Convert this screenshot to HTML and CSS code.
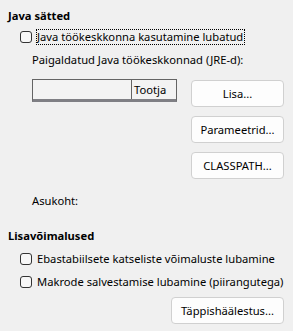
FILE: index.html
```html
<!DOCTYPE html>
<html lang="et">
<head>
    <meta charset="UTF-8">
    <title>Täpsemalt</title>
    <link rel="stylesheet" href="styles.css">
</head>
<body>
    <div class="page">
        <h2 class="group-title">Java sätted</h2>
        <label class="check-row first">
            <span class="check-box"></span>
            <span class="check-label focused">Java töökeskkonna kasutamine lubatud</span>
        </label>
        <div class="sub-label">Paigaldatud Java töökeskkonnad (JRE-d):</div>

        <div class="jre-area">
            <div class="jre-left">
                <div class="jre-table">
                    <div class="jre-cell"></div>
                    <div class="jre-cell head">Tootja</div>
                </div>
                <div class="location">Asukoht:</div>
            </div>
            <div class="jre-buttons">
                <button class="btn">Lisa...</button>
                <button class="btn">Parameetrid...</button>
                <button class="btn">CLASSPATH...</button>
            </div>
        </div>

        <h2 class="group-title second">Lisavõimalused</h2>
        <label class="check-row">
            <span class="check-box"></span>
            <span class="check-label">Ebastabiilsete katseliste võimaluste lubamine</span>
        </label>
        <label class="check-row">
            <span class="check-box"></span>
            <span class="check-label">Makrode salvestamise lubamine (piirangutega)</span>
        </label>
        <div class="bottom-actions">
            <button class="btn wide">Täppishäälestus...</button>
        </div>
    </div>
</body>
</html>
```

FILE: styles.css
```css
body { margin: 0; background: #f0f0f0; color: #000; font-family: 'Noto Sans', sans-serif; font-size: 11.2px; }
.page { padding: 8px 9px 0 8px; white-space: nowrap; }
.group-title { margin: 0; font-size: 11.2px; font-weight: bold; line-height: 16px; }
.group-title.second { margin-top: 19px; }

.check-row { display: flex; align-items: center; gap: 4px; margin-left: 12px; height: 16px; margin-top: 7px; }
.check-row.first { margin-top: 5px; }
.check-box { width: 10px; height: 10px; border: 1px solid #333; border-radius: 3px; background: #f7f7f7; flex: none; }
.check-label { line-height: 14px; padding: 0 1px 0 0; border: 1px solid transparent; }
.check-label.focused { border: 1px dotted #000; }

.sub-label { margin: 7px 0 0 24px; line-height: 16px; }

.jre-area { display: flex; justify-content: space-between; margin: 12px 0 0 24px; }
.jre-left { display: flex; flex-direction: column; }
.jre-table { display: flex; width: 143px; height: 19px; border: 1px solid #646464; border-bottom: 3px solid #7f7f84; margin-top: -1px; }
.jre-cell { flex: 1; background: #f3f3f3; line-height: 19px; }
.jre-cell.head { flex: none; width: 42px; border-left: 1px solid #646464; padding-left: 2px; }
.location { margin-top: 91px; line-height: 16px; }

.jre-buttons { display: flex; flex-direction: column; gap: 9px; }
.btn { font-family: inherit; font-size: 11.2px; color: #000; background: #fdfdfd; border: 1px solid #d0d0d0; border-radius: 4px; height: 27px; width: 93px; padding: 0; }
.btn.wide { width: 113px; }

.bottom-actions { display: flex; justify-content: flex-end; margin-top: 7px; }
```
